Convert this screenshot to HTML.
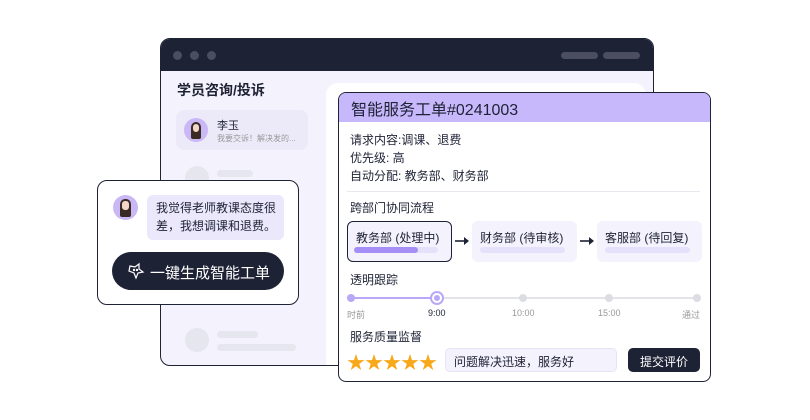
<!DOCTYPE html>
<html><head><meta charset="utf-8"><style>
*{margin:0;padding:0;box-sizing:border-box}
body{width:810px;height:420px;background:#fff;position:relative;overflow:hidden;font-family:"Liberation Sans","Noto Sans CJK SC",sans-serif;color:#1e2235}
.a{position:absolute}
.t{position:absolute;white-space:nowrap}
.sk{position:absolute;background:#e6e6ee;border-radius:4px}
</style></head><body>
<div class="a" style="left:160px;top:38px;width:494px;height:328px;background:#f4f2fc;border:1.5px solid #1e2235;border-radius:10px;overflow:hidden">
 <div class="a" style="left:0;top:0;width:100%;height:32px;background:#1e2235"></div>
 <div class="a" style="left:12px;top:12px;width:9px;height:9px;border-radius:50%;background:#4a4e60"></div>
 <div class="a" style="left:29px;top:12px;width:9px;height:9px;border-radius:50%;background:#4a4e60"></div>
 <div class="a" style="left:46px;top:12px;width:9px;height:9px;border-radius:50%;background:#4a4e60"></div>
 <div class="a" style="left:400px;top:13px;width:37px;height:7px;border-radius:4px;background:#4a4e60"></div>
 <div class="a" style="left:442px;top:13px;width:37px;height:7px;border-radius:4px;background:#4a4e60"></div>
 <div class="a" style="left:165px;top:44px;width:320px;height:300px;background:#fff;border-radius:12px"></div>
</div>
<div class="t" style="left:177px;top:80px;font-size:14px;font-weight:bold">学员咨询/投诉</div>
<div class="a" style="left:176px;top:110px;width:132px;height:40px;background:#ece9f9;border-radius:8px"></div>
<div class="a" style="left:184px;top:118px;width:24px;height:24px;border-radius:50%;background:#c9b8f5"><div class="a" style="left:7px;top:4px;width:10px;height:17px;border-radius:5px 5px 2px 2px;background:#3a2a24"></div><div class="a" style="left:9px;top:6px;width:6px;height:8px;border-radius:3px;background:#f3d6c8"></div></div>
<div class="t" style="left:217px;top:117px;font-size:11px">李玉</div>
<div class="t" style="left:217px;top:133px;font-size:8px;color:#999">我要交诉！解决发的...</div>
<div class="a" style="left:185px;top:166px;width:24px;height:24px;border-radius:50%;background:#e6e6ee"></div>
<div class="sk" style="left:217px;top:170px;width:36px;height:7px"></div>
<div class="a" style="left:185px;top:328px;width:24px;height:24px;border-radius:50%;background:#e6e6ee"></div>
<div class="sk" style="left:217px;top:331px;width:41px;height:7px"></div>
<div class="sk" style="left:217px;top:344px;width:79px;height:7px"></div>

<div class="a" style="left:338px;top:92px;width:373px;height:290px;background:#fff;border:1.5px solid #1e2235;border-radius:8px;overflow:hidden">
 <div class="a" style="left:0;top:0;width:100%;height:29px;background:#c7b8fb"></div>
</div>
<div class="t" style="left:351px;top:96px;font-size:16px">智能服务工单#0241003</div>
<div class="t" style="left:350px;top:131px;font-size:12px;line-height:18px">请求内容:调课、退费<br>优先级: 高<br>自动分配: 教务部、财务部</div>
<div class="a" style="left:347px;top:191px;width:353px;height:1px;background:#e8e8ee"></div>
<div class="t" style="left:350px;top:199px;font-size:12px">跨部门协同流程</div>
<div class="a" style="left:347px;top:221px;width:105px;height:41px;background:#f4f2fc;border:1.3px solid #1e2235;border-radius:6px"></div>
<div class="t" style="left:356px;top:229px;font-size:12px">教务部 (处理中)</div>
<div class="a" style="left:354px;top:247px;width:84px;height:6px;background:#e6e1fb;border-radius:3px"><div style="width:64px;height:6px;background:#a58ff6;border-radius:3px"></div></div>
<div class="a" style="left:472px;top:221px;width:105px;height:41px;background:#f4f2fc;border-radius:6px"></div>
<div class="t" style="left:480px;top:229px;font-size:12px">财务部 (待审核)</div>
<div class="a" style="left:480px;top:247px;width:85px;height:6px;background:#e6e1fb;border-radius:3px"></div>
<div class="a" style="left:597px;top:221px;width:105px;height:41px;background:#f4f2fc;border-radius:6px"></div>
<div class="t" style="left:605px;top:229px;font-size:12px">客服部 (待回复)</div>
<div class="a" style="left:605px;top:247px;width:85px;height:6px;background:#e6e1fb;border-radius:3px"></div>
<svg class="a" style="left:455px;top:236px" width="14" height="10"><path d="M0 5H11" stroke="#1e2235" stroke-width="1.6"/><path d="M9 1L14 5L9 9Z" fill="#1e2235"/></svg>
<svg class="a" style="left:580px;top:236px" width="14" height="10"><path d="M0 5H11" stroke="#1e2235" stroke-width="1.6"/><path d="M9 1L14 5L9 9Z" fill="#1e2235"/></svg>
<div class="t" style="left:350px;top:271px;font-size:12px">透明跟踪</div>
<div class="a" style="left:351px;top:297px;width:346px;height:2px;background:#e3e3ea"></div>
<div class="a" style="left:351px;top:297px;width:86px;height:2px;background:#b9a8f8"></div>
<div class="a" style="left:347px;top:294px;width:8px;height:8px;border-radius:50%;background:#b9a8f8"></div>
<div class="a" style="left:430px;top:291px;width:14px;height:14px;border-radius:50%;background:#fff;border:2px solid #b9a8f8"><div class="a" style="left:2px;top:2px;width:6px;height:6px;border-radius:50%;background:#b9a8f8"></div></div>
<div class="a" style="left:519px;top:294px;width:8px;height:8px;border-radius:50%;background:#dcdce3"></div>
<div class="a" style="left:605px;top:294px;width:8px;height:8px;border-radius:50%;background:#dcdce3"></div>
<div class="a" style="left:693px;top:294px;width:8px;height:8px;border-radius:50%;background:#dcdce3"></div>
<div class="t" style="left:347px;top:308px;font-size:9px;color:#999">时前</div>
<div class="t" style="left:428px;top:308px;font-size:9px">9:00</div>
<div class="t" style="left:512px;top:308px;font-size:9px;color:#999">10:00</div>
<div class="t" style="left:598px;top:308px;font-size:9px;color:#999">15:00</div>
<div class="t" style="left:682px;top:308px;font-size:9px;color:#999">通过</div>
<div class="t" style="left:350px;top:328px;font-size:12px">服务质量监督</div>
<div class="t" style="left:347px;top:349px;font-size:18px;color:#f8a81b;letter-spacing:0px">★★★★★</div>
<div class="a" style="left:445px;top:348px;width:172px;height:24px;background:#f4f2fc;border:1px solid #e6e3f5;border-radius:5px"></div>
<div class="t" style="left:454px;top:353px;font-size:12px">问题解决迅速，服务好</div>
<div class="a" style="left:628px;top:348px;width:72px;height:24px;background:#1e2235;border-radius:5px"></div>
<div class="t" style="left:640px;top:353px;font-size:12px;color:#fff">提交评价</div>

<div class="a" style="left:97px;top:180px;width:202px;height:125px;background:#fff;border:1.5px solid #1e2235;border-radius:10px"></div>
<div class="a" style="left:113px;top:195px;width:25px;height:25px;border-radius:50%;background:#c9b8f5"><div class="a" style="left:7px;top:4px;width:11px;height:18px;border-radius:5px 5px 2px 2px;background:#3a2a24"></div><div class="a" style="left:9px;top:6px;width:7px;height:9px;border-radius:3px;background:#f3d6c8"></div></div>
<div class="a" style="left:147px;top:195px;width:137px;height:45px;background:#ece8fc;border-radius:6px"></div>
<div class="t" style="left:156px;top:199px;font-size:12px;line-height:18px">我觉得老师教课态度很<br>差，我想调课和退费。</div>
<div class="a" style="left:112px;top:252px;width:172px;height:38px;background:#1e2235;border-radius:19px"></div>
<svg class="a" style="left:127px;top:262px" width="18" height="18" viewBox="0 0 18 18" fill="none" stroke="#fff" stroke-width="1.2"><path d="M3 4 L8 5 L12 2 L12 7 L16 10 L11 11 L9 16 L7 11 L2 9 Z"/><circle cx="7" cy="8" r=".6" fill="#fff"/><circle cx="10" cy="8" r=".6" fill="#fff"/></svg>
<div class="t" style="left:150px;top:262px;font-size:15px;color:#fff">一键生成智能工单</div>
</body></html>
